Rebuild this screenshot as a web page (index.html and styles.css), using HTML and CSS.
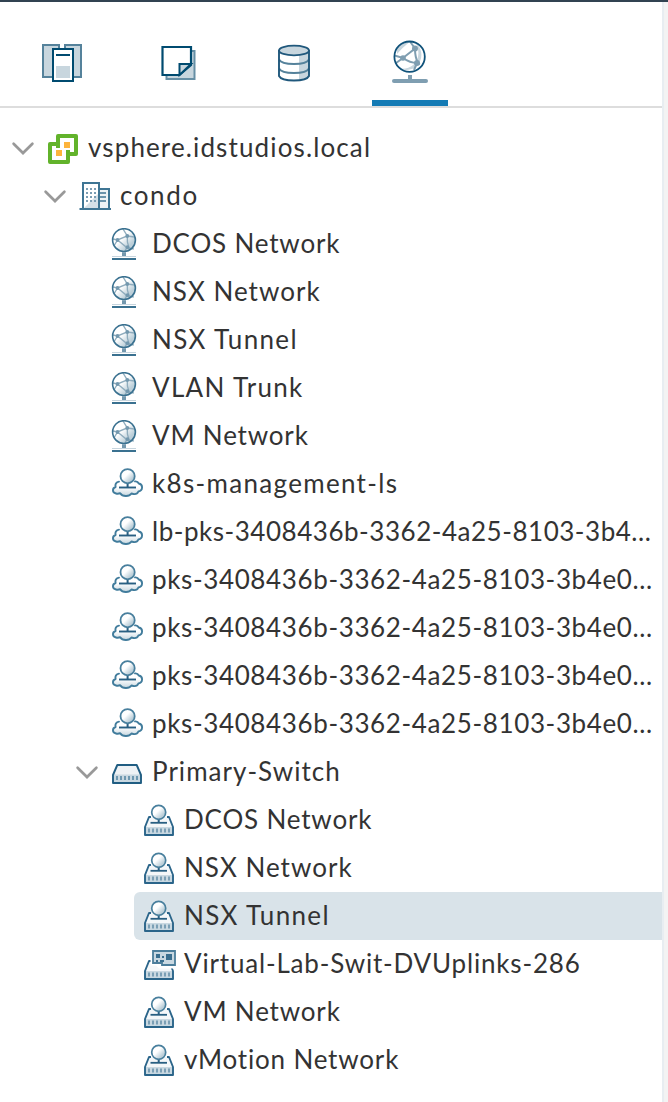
FILE: index.html
```html
<!DOCTYPE html>
<html lang="en">
<head>
<meta charset="utf-8">
<title>vSphere Navigator</title>
<link rel="stylesheet" href="styles.css">
</head>
<body>
<svg class="sprite" aria-hidden="true">
  <defs>
    <linearGradient id="ball" x1="0.1" y1="0.1" x2="0.9" y2="0.9"><stop offset="0.4" stop-color="#fff"/><stop offset="0.8" stop-color="#bccfd9"/></linearGradient>
    <linearGradient id="body" x1="0" y1="0" x2="0" y2="1"><stop offset="0.4" stop-color="#fff"/><stop offset="1" stop-color="#c6d6df"/></linearGradient>
  </defs>
  <symbol id="chevron" viewBox="0 0 24 24"><path d="M2.6 7.8 12 17l9.4-9.2" fill="none" stroke="#999" stroke-width="2.7" stroke-linecap="round"/></symbol>
  <symbol id="vcenter" viewBox="0 0 32 32">
    <path d="M11 4H29V22H21V30H3V12H11Z" fill="#fff" stroke="#62b32b" stroke-width="4" stroke-linejoin="round"/>
    <path d="M11 12V16M21 22V18" stroke="#62b32b" stroke-width="4"/>
    <path d="M17 10h6v6h-6zM9 18h6v6H9z" fill="#fdb43c"/>
  </symbol>
  <symbol id="datacenter" viewBox="0 0 32 32">
    <path d="M4 3h16v26H4z" fill="#fff"/><path d="M4 29 20 13v16z" fill="#d5e0e7"/><path d="M20 9h10v20H20z" fill="#edf2f5"/>
    <path d="M4 29V3h16v26M20 9h10v20" fill="none" stroke="#3f7594" stroke-width="2"/>
    <path d="M7 9h11M7 13h11M7 17h11M7 21h11" stroke="#7b9db3" stroke-width="1.8" stroke-dasharray="2 2"/>
    <path d="M21 13h6M21 17h6M21 21h6" stroke="#6b93ab" stroke-width="1.8"/>
    <path d="M0.500 29h32" stroke="#3f7594" stroke-width="2"/>
  </symbol>
  <symbol id="network" viewBox="0 0 32 32">
    <circle cx="13" cy="12.1" r="11.4" fill="url(#ball)"/>
    <path d="M2 11 6.500 12l9.800-4L12 1M6.500 12l9.300 7.500 7 1.500M16.300 8q-.5 6 1.500 11M16.300 8l7 1M6.500 12l-3 5M15.800 19.500 14 23" fill="none" stroke="#8facbd" stroke-width="1.400"/>
    <circle cx="6.500" cy="12" r="1.900" fill="#7398ae"/><circle cx="16.300" cy="8" r="1.900" fill="#7398ae"/><circle cx="16.500" cy="19.200" r="1.900" fill="#7398ae"/>
    <circle cx="13" cy="12.100" r="11.400" fill="none" stroke="#3a7190" stroke-width="1.600"/>
    <path d="M11 24.200h4V29h-4z" fill="#7398ae"/><path d="M1 28.500h24" stroke="#c7d5de"/><path d="M1 31h24" stroke="#3a7190" stroke-width="2"/>
  </symbol>
  <symbol id="segment" viewBox="0 0 32 32">
    <path d="M8 13.600C5 14 4 16.500 4.600 19 1.200 20 .800 24.600 5 25.500c1.600.4 3 .2 4.200-.3 2.300 3.600 8.800 3.800 11.300.3 3.300 1.200 6 .2 6.900-2 4.800-.8 4.800-7.200.4-8-.8-1.700-2.200-2.300-3.800-2.100" fill="url(#body)" stroke="#417c9c" stroke-width="1.900" stroke-linecap="round" stroke-linejoin="round"/>
    <path d="M16.600 15v4" stroke="#285f82" stroke-width="2"/><path d="M8 19.500h17" stroke="#285f82" stroke-width="1.900"/>
    <circle cx="16.600" cy="8.200" r="7.100" fill="url(#ball)" stroke="#487f9d" stroke-width="1.800"/>
  </symbol>
  <symbol id="switch" viewBox="0 0 32 32">
    <path d="M6.300 9h19.400L30 19v8H2v-8z" fill="#eef2f5"/><path d="M2 18.500h28V27H2z" fill="#c9d8e1"/>
    <path d="M6.300 9h19.400L30 19v8H2v-8z" fill="none" stroke="#205d82" stroke-width="1.900" stroke-linejoin="round"/>
    <path d="M5 22h22" stroke="#6e98b0" stroke-width="4" stroke-dasharray="2 2"/>
  </symbol>
  <symbol id="pgbase" viewBox="0 0 32 32">
    <path d="M6 13h20l4 10v8H2v-8z" fill="#f4f7f9"/><path d="M2 23h28v8H2z" fill="#c9d8e1"/>
    <path d="M8 13H6L2 23v8h28v-8l-4-10h-2" fill="none" stroke="#2b658a" stroke-width="1.900" stroke-linejoin="round"/>
    <path d="M5 26.500h22" stroke="#7b9fb5" stroke-width="4" stroke-dasharray="2 2"/>
  </symbol>
  <symbol id="portgroup" viewBox="0 0 32 32">
    <use href="#pgbase"/>
    <path d="M15.700 15v3.500" stroke="#285f82" stroke-width="2"/><path d="M7.500 18.800h16.500" stroke="#285f82" stroke-width="1.800"/>
    <circle cx="15.700" cy="8.300" r="7" fill="url(#ball)" stroke="#487f9d" stroke-width="1.700"/>
  </symbol>
  <symbol id="uplink" viewBox="0 0 34 32">
    <use href="#pgbase" width="32" height="32"/>
    <path d="M7.500 11.500h26v9H16l-3-3H7.500z" fill="#fff"/>
    <path d="M10 3h22v14H19v-2h-9z" fill="#c9d8e1" stroke="#4c7e9b" stroke-width="1.800"/>
    <path d="M13 6h4v4h-4zM23 6h6v6h-6zM13 12h2v2h-2zM19 8h2v2h-2zM17 12h4v2h-4z" fill="#3b6f8f"/>
  </symbol>
</svg>

<div class="app">
  <aside class="navigator">
    <nav class="tabs">
      <a class="tab"><svg class="tab-icon" viewBox="0 0 44 44">
        <path d="M3 6h16v32H3zM25 6h16v32H25z" fill="#c8d6de" stroke="#55829b" stroke-width="2"/>
        <path d="M20 5h4v5h-4z" fill="#fff"/>
        <path d="M13 10h20v32H13z" fill="#fff" stroke="#004b70" stroke-width="2"/>
        <path d="M16 16h14" stroke="#004b70" stroke-width="2"/><path d="M16 27h14v12H16z" fill="#c8d6de"/>
      </svg></a>
      <a class="tab"><svg class="tab-icon" viewBox="0 0 44 44">
        <path d="M10.500 12h28v28h-28z" fill="#c8d6de" stroke="#668fa5" stroke-width="2"/>
        <path d="M6.500 8h28.500v18L23.500 36h-17z" fill="#fff" stroke="#004b70" stroke-width="2.200"/>
        <path d="M23.500 36V25H35z" fill="#c8d6de" stroke="#004b70" stroke-width="2"/>
      </svg></a>
      <a class="tab"><svg class="tab-icon" viewBox="0 0 44 44">
        <path d="M7 11v26c3 6 27 6 30 0V11z" fill="#fff"/><path d="M27 15c4 0 8-1 10-3v25c-2 3-6 4-10 4z" fill="#c8d6de"/>
        <path d="M7 20.500c3 6 27 6 30 0M7 29.500c3 6 27 6 30 0" fill="none" stroke="#55829b" stroke-width="2"/>
        <path d="M7 11v26c3 6 27 6 30 0V11" fill="none" stroke="#20587c" stroke-width="1.900"/>
        <ellipse cx="22" cy="11.500" rx="15" ry="4.800" fill="#c8d6de" stroke="#20587c" stroke-width="1.800"/>
      </svg></a>
      <a class="tab active"><svg class="tab-icon" viewBox="0 0 44 44">
        <circle cx="21.600" cy="18.700" r="15.200" fill="#fff"/>
        <g transform="translate(0 2)">
        <path d="M28 3.200a15.200 15.200 0 0 1-16 25.500C22 30 29 23 30 17c1-5 0-10-2-13.800z" fill="#c8d6de"/>
        <path d="M9 9q5-6 13-7.500Q14 8 9 14z" fill="#c8d6de"/>
        <path d="M6.500 15.500 15 18 27 8.500 22 1.500M27 8.500q0 9 3 14.500M15 18q7 5 14 5l3 1M15 18l-7 5M29 23l-3 7" fill="none" stroke="#7f9eb1" stroke-width="2"/>
        <circle cx="15" cy="18" r="2.800" fill="#7f9eb1"/><circle cx="27" cy="8.500" r="3" fill="#7f9eb1"/><circle cx="29" cy="23" r="3" fill="#7f9eb1"/>
        </g>
        <circle cx="21.600" cy="18.700" r="15.200" fill="none" stroke="#10527a" stroke-width="1.800"/>
        <path d="M22 37v5" stroke="#7f9eb1" stroke-width="4"/><path d="M6 43h32" stroke="#7f9eb1" stroke-width="4" stroke-linecap="round"/>
      </svg></a>
    </nav>
    <div class="tree">
      <div class="row l0"><svg class="chev"><use href="#chevron"/></svg><svg class="icon"><use href="#vcenter"/></svg><span class="label t-host">vsphere.idstudios.local</span></div>
      <div class="row l1"><svg class="chev"><use href="#chevron"/></svg><svg class="icon"><use href="#datacenter"/></svg><span class="label t-dc">condo</span></div>
      <div class="row l2 leaf"><svg class="icon"><use href="#network"/></svg><span class="label">DCOS Network</span></div>
      <div class="row l2 leaf"><svg class="icon"><use href="#network"/></svg><span class="label t-wide">NSX Network</span></div>
      <div class="row l2 leaf"><svg class="icon"><use href="#network"/></svg><span class="label t-wider">NSX Tunnel</span></div>
      <div class="row l2 leaf"><svg class="icon"><use href="#network"/></svg><span class="label t-wider">VLAN Trunk</span></div>
      <div class="row l2 leaf"><svg class="icon"><use href="#network"/></svg><span class="label">VM Network</span></div>
      <div class="row l2 leaf"><svg class="icon"><use href="#segment"/></svg><span class="label t-wider">k8s-management-ls</span></div>
      <div class="row l2 leaf"><svg class="icon"><use href="#segment"/></svg><span class="label t-lb">lb-pks-3408436b-3362-4a25-8103-3b4...</span></div>
      <div class="row l2 leaf"><svg class="icon"><use href="#segment"/></svg><span class="label t-pks">pks-3408436b-3362-4a25-8103-3b4e0...</span></div>
      <div class="row l2 leaf"><svg class="icon"><use href="#segment"/></svg><span class="label t-pks">pks-3408436b-3362-4a25-8103-3b4e0...</span></div>
      <div class="row l2 leaf"><svg class="icon"><use href="#segment"/></svg><span class="label t-pks">pks-3408436b-3362-4a25-8103-3b4e0...</span></div>
      <div class="row l2 leaf"><svg class="icon"><use href="#segment"/></svg><span class="label t-pks">pks-3408436b-3362-4a25-8103-3b4e0...</span></div>
      <div class="row l2"><svg class="chev"><use href="#chevron"/></svg><svg class="icon"><use href="#switch"/></svg><span class="label t-wide">Primary-Switch</span></div>
      <div class="row l3 leaf"><svg class="icon"><use href="#portgroup"/></svg><span class="label">DCOS Network</span></div>
      <div class="row l3 leaf"><svg class="icon"><use href="#portgroup"/></svg><span class="label t-wide">NSX Network</span></div>
      <div class="row l3 leaf selected"><svg class="icon"><use href="#portgroup"/></svg><span class="label t-wider">NSX Tunnel</span></div>
      <div class="row l3 leaf"><svg class="icon"><use href="#uplink" width="34" height="32"/></svg><span class="label">Virtual-Lab-Swit-DVUplinks-286</span></div>
      <div class="row l3 leaf"><svg class="icon"><use href="#portgroup"/></svg><span class="label">VM Network</span></div>
      <div class="row l3 leaf"><svg class="icon"><use href="#portgroup"/></svg><span class="label">vMotion Network</span></div>
    </div>
  </aside>
</div>
</body>
</html>
```
FILE: styles.css
```css
* { box-sizing: border-box; }
body {
  margin: 0;
  background: #f3f3f3;
  color: #333;
  font-family: Lato, "Open Sans", sans-serif;
  font-size: 26px;
  overflow: hidden;
}
.sprite { position: absolute; width: 0; height: 0; }
.app { height: 1102px; border-top: 2px solid #314351; }
.navigator {
  width: 664px;
  height: 1100px;
  background: #fff;
  border-right: 2px solid #e8edf1;
}
.tabs {
  display: flex;
  gap: 40px;
  height: 106px;
  padding-left: 24px;
  border-bottom: 2px solid #ddd;
}
.tab {
  width: 76px;
  height: 104px;
  padding: 37px 16px 0;
}
.tab.active { border-bottom: 6px solid #147bb5; }
.tab.active .tab-icon { margin-top: -1px; }
.tab-icon { display: block; width: 44px; height: 44px; overflow: visible; }
.tree { padding-top: 16px; }
.row {
  display: flex;
  align-items: center;
  height: 48px;
  white-space: nowrap;
}
.chev { flex: none; width: 24px; height: 24px; margin-right: 12px; }
.icon { flex: none; width: 32px; height: 32px; margin-right: 9px; overflow: visible; }
.label { line-height: 32px; letter-spacing: 0.82px; padding-bottom: 3px; }
.t-host { letter-spacing: 1.13px; }
.t-dc { letter-spacing: 1.6px; }
.t-wide { letter-spacing: 1.02px; }
.t-wider { letter-spacing: 1.32px; }
.t-lb { letter-spacing: 0.53px; }
.t-pks { letter-spacing: 0.63px; }
.l0 { padding-left: 11px; }
.l1 { padding-left: 43px; }
.l2 { padding-left: 75px; }
.l2.leaf { padding-left: 111px; }
.l3.leaf { margin-left: 134px; padding-left: 9px; }
.selected { background: #d9e3e9; border-radius: 6px 0 0 6px; }
```
